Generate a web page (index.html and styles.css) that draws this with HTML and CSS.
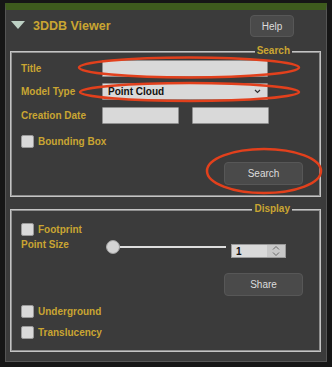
FILE: index.html
```html
<!DOCTYPE html>
<html lang="en">
<head>
    <meta charset="UTF-8">
    <title>3DDB Viewer</title>
    <link rel="stylesheet" href="styles.css">
</head>
<body>

    <div class="panel">
        <div class="header">
            <span class="toggle"></span>
            <span class="title">3DDB Viewer</span>
            <button class="button help">Help</button>
        </div>

        <!-- search form -->
        <div class="group search">
            <div class="legend"><span>Search</span></div>
            <div class="row">
                <label>Title</label>
                <div class="field"></div>
            </div>
            <div class="row">
                <label>Model Type</label>
                <div class="field select">Point Cloud
                    <svg class="caret" width="7" height="5" viewBox="0 0 7 5"><path d="M1 1 L3.5 3.5 L6 1" fill="none" stroke="#333" stroke-width="1.2"/></svg>
                </div>
            </div>
            <div class="row">
                <label>Creation Date</label>
                <div class="dates">
                    <div class="field"></div>
                    <div class="field"></div>
                </div>
            </div>
            <div class="check bbox"><span class="box"></span>Bounding Box</div>
            <div class="actions search-actions">
                <button class="button">Search</button>
            </div>
        </div>

        <!-- display options -->
        <div class="group display">
            <div class="legend"><span>Display</span></div>
            <div class="check footprint"><span class="box"></span>Footprint</div>
            <div class="size-row">
                <label>Point Size</label>
                <div class="slider"><span class="thumb"></span></div>
                <div class="number">1
                    <span class="spin">
                        <svg width="10" height="12" viewBox="0 0 10 12"><path d="M2 4.5 L5 1.5 L8 4.5 M2 7.5 L5 10.5 L8 7.5" fill="none" stroke="#6a6a6a" stroke-width="1"/></svg>
                    </span>
                </div>
            </div>
            <div class="actions share-actions">
                <button class="button">Share</button>
            </div>
            <div class="check underground"><span class="box"></span>Underground</div>
            <div class="check translucency"><span class="box"></span>Translucency</div>
        </div>
    </div>

    <svg class="marks" width="332" height="367">
        <ellipse cx="189" cy="67.5" rx="110" ry="10" />
        <ellipse cx="189.5" cy="92" rx="109.5" ry="9" />
        <ellipse cx="264" cy="171" rx="57" ry="22" />
    </svg>

</body>
</html>
```

FILE: styles.css
```css
body {
    margin: 0;
    padding: 3px 0 0 5px;
    background-color: #161616;
    font-family: "Liberation Sans", Arial, sans-serif;
    font-size: 10px;
    position: relative;
    width: 332px;
    height: 367px;
    box-sizing: border-box;
    overflow: hidden;
}
.panel {
    width: 322px;
    height: 359px;
    box-sizing: border-box;
    background: #3b3b3b;
    border: 1px solid #555;
    border-top: 7px solid #3e5b1d;
}
.header {
    display: flex;
    align-items: center;
    padding: 5px 32px 0 5px;
    height: 22px;
}
.toggle {
    width: 0;
    height: 0;
    border-left: 7.5px solid transparent;
    border-right: 7.5px solid transparent;
    border-top: 8px solid #bdd0c4;
    margin-right: 8px;
    margin-top: -2px;
}
.title {
    color: #c9a532;
    font-weight: bold;
    font-size: 12.5px;
}
.button {
    font-family: inherit;
    font-size: 10px;
    color: #dcdcdc;
    background: #4a4a4a;
    border: 1px solid #575757;
    border-radius: 4px;
    padding: 0;
    height: 23px;
}
.help {
    margin-left: auto;
    width: 44px;
    height: 22px;
}
.group {
    margin: 0 5px 0 4px;
    padding: 0 0 0 10px;
    border: 1px solid #c4c4c4;
    box-shadow: inset 0 0 0 1px #8e8e8e;
    box-sizing: border-box;
}
.legend {
    text-align: right;
    margin: -7px 28px 0 0;
    height: 12px;
    line-height: 12px;
    color: #c9a532;
    font-weight: bold;
}
.legend span {
    background: #3b3b3b;
    padding: 0 2px;
}
.search {
    margin-top: 14px;
    height: 146px;
}
.display {
    margin-top: 12px;
    height: 143px;
}
label,
.check {
    color: #c9a532;
    font-weight: bold;
    font-size: 10px;
}
.row {
    display: flex;
    align-items: center;
    margin-top: 6px;
}
.legend + .row {
    margin-top: 3px;
}
.row:nth-child(4) {
    margin-top: 7px;
}
.row label {
    width: 81px;
    flex: none;
}
.field {
    width: 166px;
    height: 17px;
    box-sizing: border-box;
    background: #d9d9d9;
    border: 1px solid #8f8f8f;
    border-radius: 1px;
}
.select {
    display: flex;
    align-items: center;
    padding-left: 5px;
    color: #111;
    font-weight: bold;
}
.caret {
    margin-left: auto;
    margin-right: 6px;
}
.dates {
    display: flex;
    gap: 13px;
}
.dates .field {
    width: 77px;
}
.check {
    display: flex;
    align-items: center;
    height: 14px;
}
.box {
    width: 13px;
    height: 13px;
    box-sizing: border-box;
    background: #d9d9d9;
    border: 1px solid #9a9a9a;
    border-radius: 2px;
    margin-right: 4px;
}
.bbox {
    margin-top: 10px;
}
.actions {
    display: flex;
    justify-content: flex-end;
    padding-right: 17px;
}
.actions .button {
    width: 79px;
}
.search-actions {
    margin-top: 14px;
}
.footprint {
    margin-top: 7px;
}
.size-row {
    display: flex;
    align-items: flex-start;
    margin-top: 3px;
    height: 19px;
}
.size-row label {
    width: 85px;
    flex: none;
    line-height: 12px;
}
.slider {
    position: relative;
    width: 120px;
    height: 2px;
    background: #dedede;
    margin-top: 7px;
}
.thumb {
    position: absolute;
    left: 0;
    top: -6px;
    width: 14px;
    height: 14px;
    box-sizing: border-box;
    border-radius: 50%;
    background: #d3d3d3;
    border: 1px solid #a0a0a0;
}
.number {
    display: flex;
    align-items: center;
    width: 55px;
    height: 14px;
    box-sizing: border-box;
    margin-left: 5px;
    margin-top: 5px;
    padding-left: 4px;
    background: #dadada;
    border: 1px solid #9a9a9a;
    color: #111;
    font-weight: bold;
}
.spin {
    margin-left: auto;
    width: 18px;
    height: 12px;
    background: #c8c8c8;
    display: flex;
    justify-content: center;
}
.share-actions {
    margin-top: 15px;
}
.underground {
    margin-top: 8px;
}
.translucency {
    margin-top: 7px;
}
.marks {
    position: absolute;
    left: 0;
    top: 0;
    pointer-events: none;
}
.marks ellipse {
    fill: none;
    stroke: #e2401c;
    stroke-width: 2.5;
}
```
